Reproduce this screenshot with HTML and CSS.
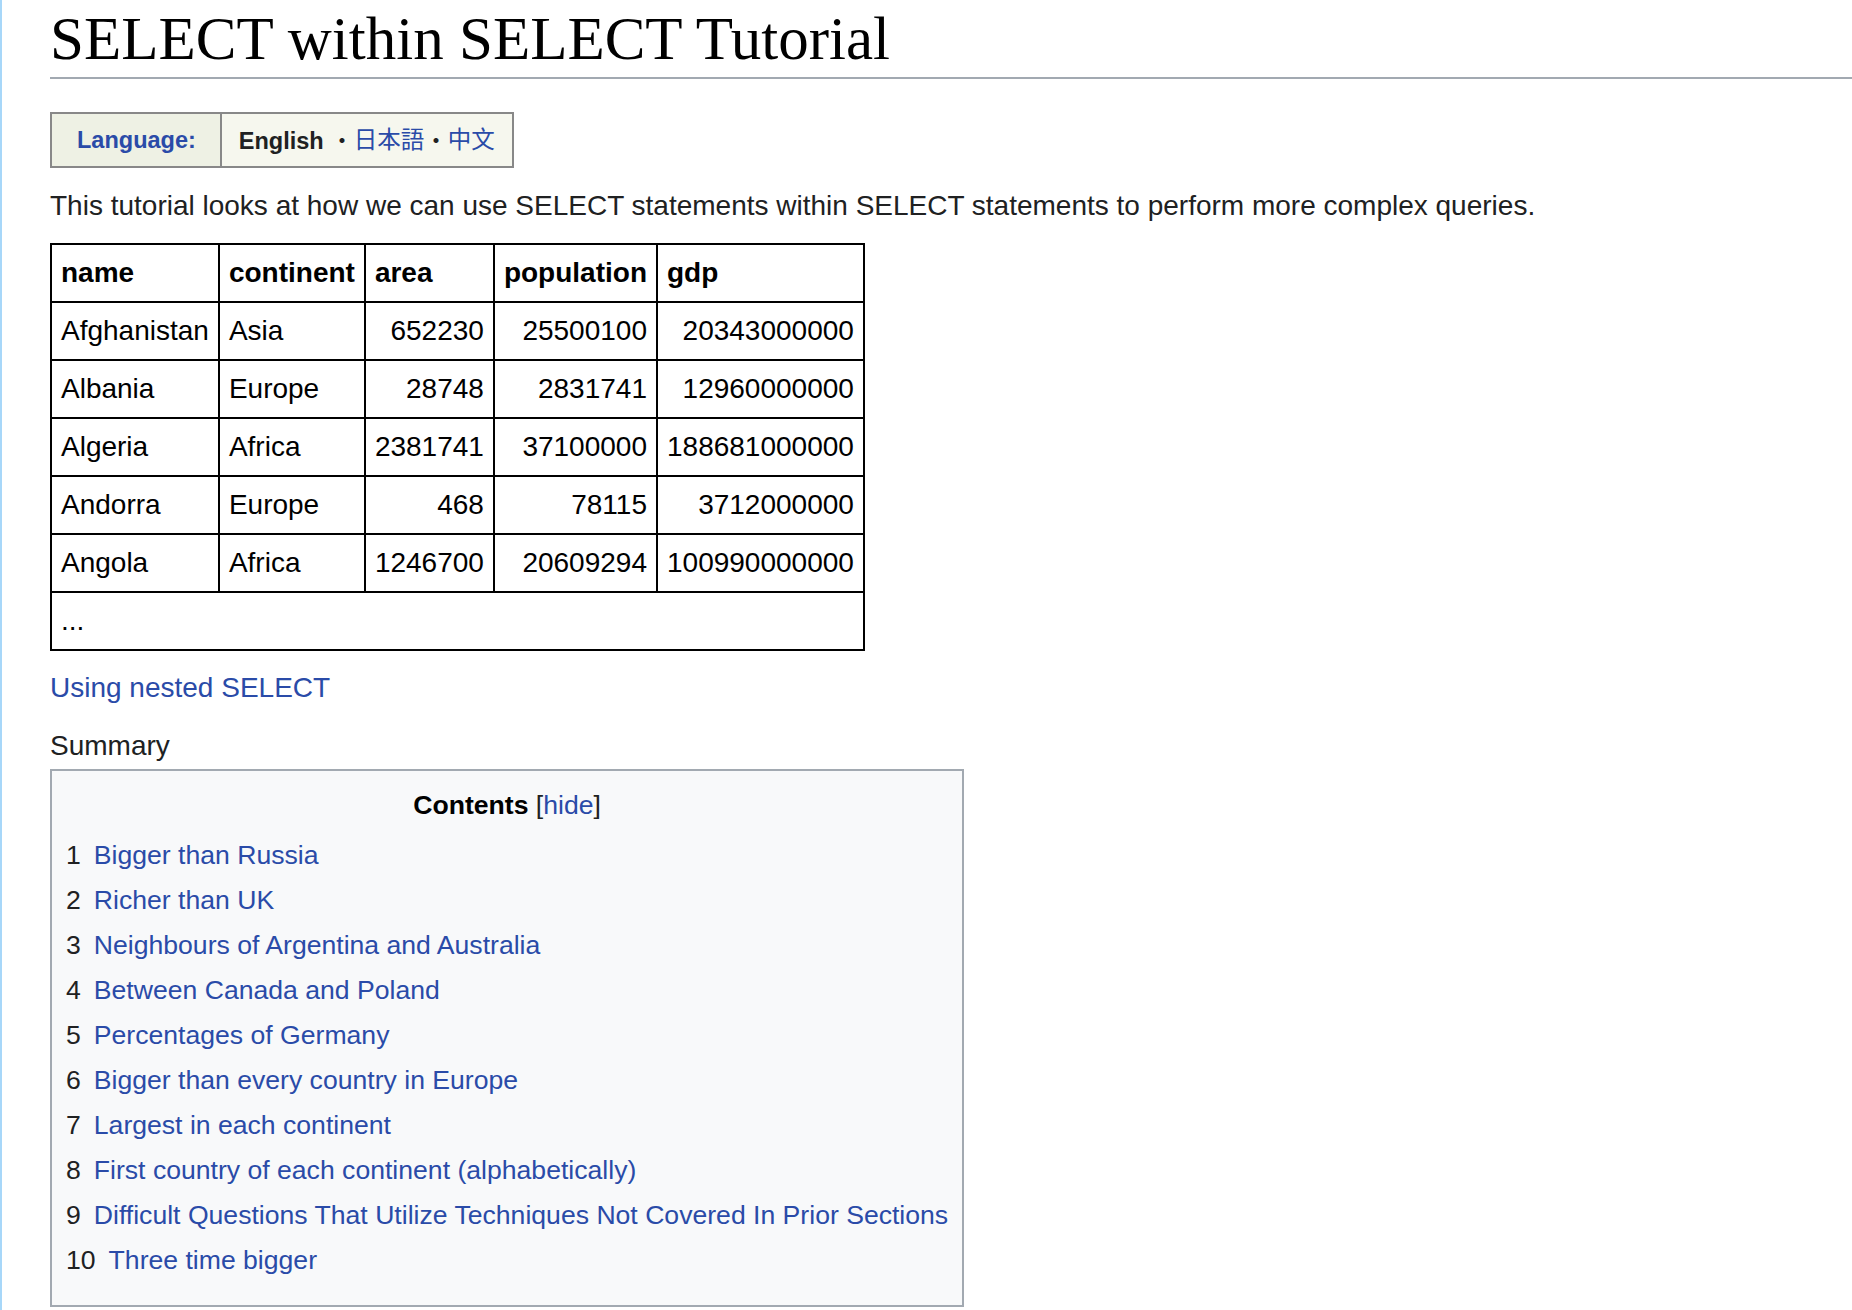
FILE: index.html
```html
<!DOCTYPE html>
<html lang="en">
<head>
<meta charset="utf-8">
<title>SELECT within SELECT Tutorial</title>
<link rel="stylesheet" href="styles.css">
</head>
<body>
<div class="content">
  <h1 class="page-title">SELECT within SELECT Tutorial</h1>
  <div class="lang">
    <div class="lang-label">Language:</div>
    <div class="lang-list"><span class="lang-line"><b class="lang-current">English</b> <span class="sep">・</span><a href="#" class="cjk">日本語</a><span class="sep">・</span><a href="#" class="cjk-sc">中文</a></span></div>
  </div>
  <p class="intro">This tutorial looks at how we can use SELECT statements within SELECT statements to perform more complex queries.</p>
  <table class="world">
    <thead>
      <tr><th>name</th><th>continent</th><th>area</th><th>population</th><th>gdp</th></tr>
    </thead>
    <tbody>
      <tr><td>Afghanistan</td><td>Asia</td><td class="num">652230</td><td class="num">25500100</td><td class="num">20343000000</td></tr>
      <tr><td>Albania</td><td>Europe</td><td class="num">28748</td><td class="num">2831741</td><td class="num">12960000000</td></tr>
      <tr><td>Algeria</td><td>Africa</td><td class="num">2381741</td><td class="num">37100000</td><td class="num">188681000000</td></tr>
      <tr><td>Andorra</td><td>Europe</td><td class="num">468</td><td class="num">78115</td><td class="num">3712000000</td></tr>
      <tr><td>Angola</td><td>Africa</td><td class="num">1246700</td><td class="num">20609294</td><td class="num">100990000000</td></tr>
      <tr><td colspan="5" class="more">...</td></tr>
    </tbody>
  </table>
  <p class="nested"><a href="#">Using nested SELECT</a></p>
  <p class="summary">Summary</p>
  <div class="toc">
    <div class="toc-title"><b>Contents</b> <span class="toggle">[<a href="#">hide</a>]</span></div>
    <ul class="toc-list">
      <li><span class="toc-num">1</span><a href="#">Bigger than Russia</a></li>
      <li><span class="toc-num">2</span><a href="#">Richer than UK</a></li>
      <li><span class="toc-num">3</span><a href="#">Neighbours of Argentina and Australia</a></li>
      <li><span class="toc-num">4</span><a href="#">Between Canada and Poland</a></li>
      <li><span class="toc-num">5</span><a href="#">Percentages of Germany</a></li>
      <li><span class="toc-num">6</span><a href="#">Bigger than every country in Europe</a></li>
      <li><span class="toc-num">7</span><a href="#">Largest in each continent</a></li>
      <li><span class="toc-num">8</span><a href="#">First country of each continent (alphabetically)</a></li>
      <li><span class="toc-num">9</span><a href="#">Difficult Questions That Utilize Techniques Not Covered In Prior Sections</a></li>
      <li><span class="toc-num">10</span><a href="#">Three time bigger</a></li>
    </ul>
  </div>
</div>
</body>
</html>
```

FILE: styles.css
```css
html, body {
  margin: 0;
  padding: 0;
  background: #ffffff;
}

body {
  font-family: "Liberation Sans", Arial, Helvetica, sans-serif;
  font-size: 28px;
  color: #202122;
}

a {
  color: #2a4ba8;
  text-decoration: none;
}

.content {
  border-left: 2px solid #a7d7f9;
  padding: 0 0 40px 48px;
  min-height: 1310px;
  box-sizing: border-box;
}

.page-title {
  margin: 0;
  font-family: "Liberation Serif", "Times New Roman", serif;
  font-weight: normal;
  font-size: 61px;
  line-height: 77px;
  color: #000;
  border-bottom: 2px solid #a2a9b1;
}

.lang {
  display: inline-flex;
  margin-top: 33px;
  border: 2px solid #888888;
  font-size: 23.5px;
}

.lang-label {
  display: flex;
  align-items: center;
  height: 52px;
  padding: 0 24px 0 25px;
  background: #eef1e4;
  border-right: 2px solid #888888;
  color: #2a4ba8;
  font-weight: bold;
}

.lang-list {
  display: flex;
  align-items: center;
  height: 52px;
  padding: 0 17px 0 17px;
  background: #f6f7ee;
  white-space: pre;
}

.lang-line {
  line-height: 27px;
}

.lang-current {
  color: #202122;
}

.sep {
  font-family: "Noto Sans CJK JP", sans-serif;
  color: #202122;
}

.cjk {
  font-family: "Noto Sans CJK JP", sans-serif;
  vertical-align: 1px;
}

.cjk-sc {
  font-family: "Noto Sans CJK SC", sans-serif;
  vertical-align: 1px;
}

.intro {
  margin: 16px 0 14px;
  line-height: 44.8px;
}

.world {
  border-collapse: collapse;
  color: #000;
}

.world th,
.world td {
  border: 2px solid #000;
  padding: 8px 9px;
  line-height: 40px;
  text-align: left;
  white-space: nowrap;
}

.world th {
  font-weight: bold;
}

.world td.num {
  text-align: right;
}

.nested {
  margin: 15px 0 0;
  line-height: 44.8px;
}

.summary {
  margin: 13px 0 0;
  line-height: 44.8px;
}

.toc {
  display: inline-block;
  margin-top: 1px;
  padding: 14px 14px 22px;
  background: #f8f9fa;
  border: 2px solid #a2a9b1;
  font-size: 26.6px;
}

.toc-title {
  text-align: center;
  line-height: 40px;
  color: #000;
}

.toggle {
  color: #202122;
}

.toc-list {
  list-style: none;
  margin: 8px 0 0;
  padding: 0;
}

.toc-list li {
  line-height: 45px;
  white-space: nowrap;
}

.toc-num {
  color: #202122;
  padding-right: 13px;
}
```
